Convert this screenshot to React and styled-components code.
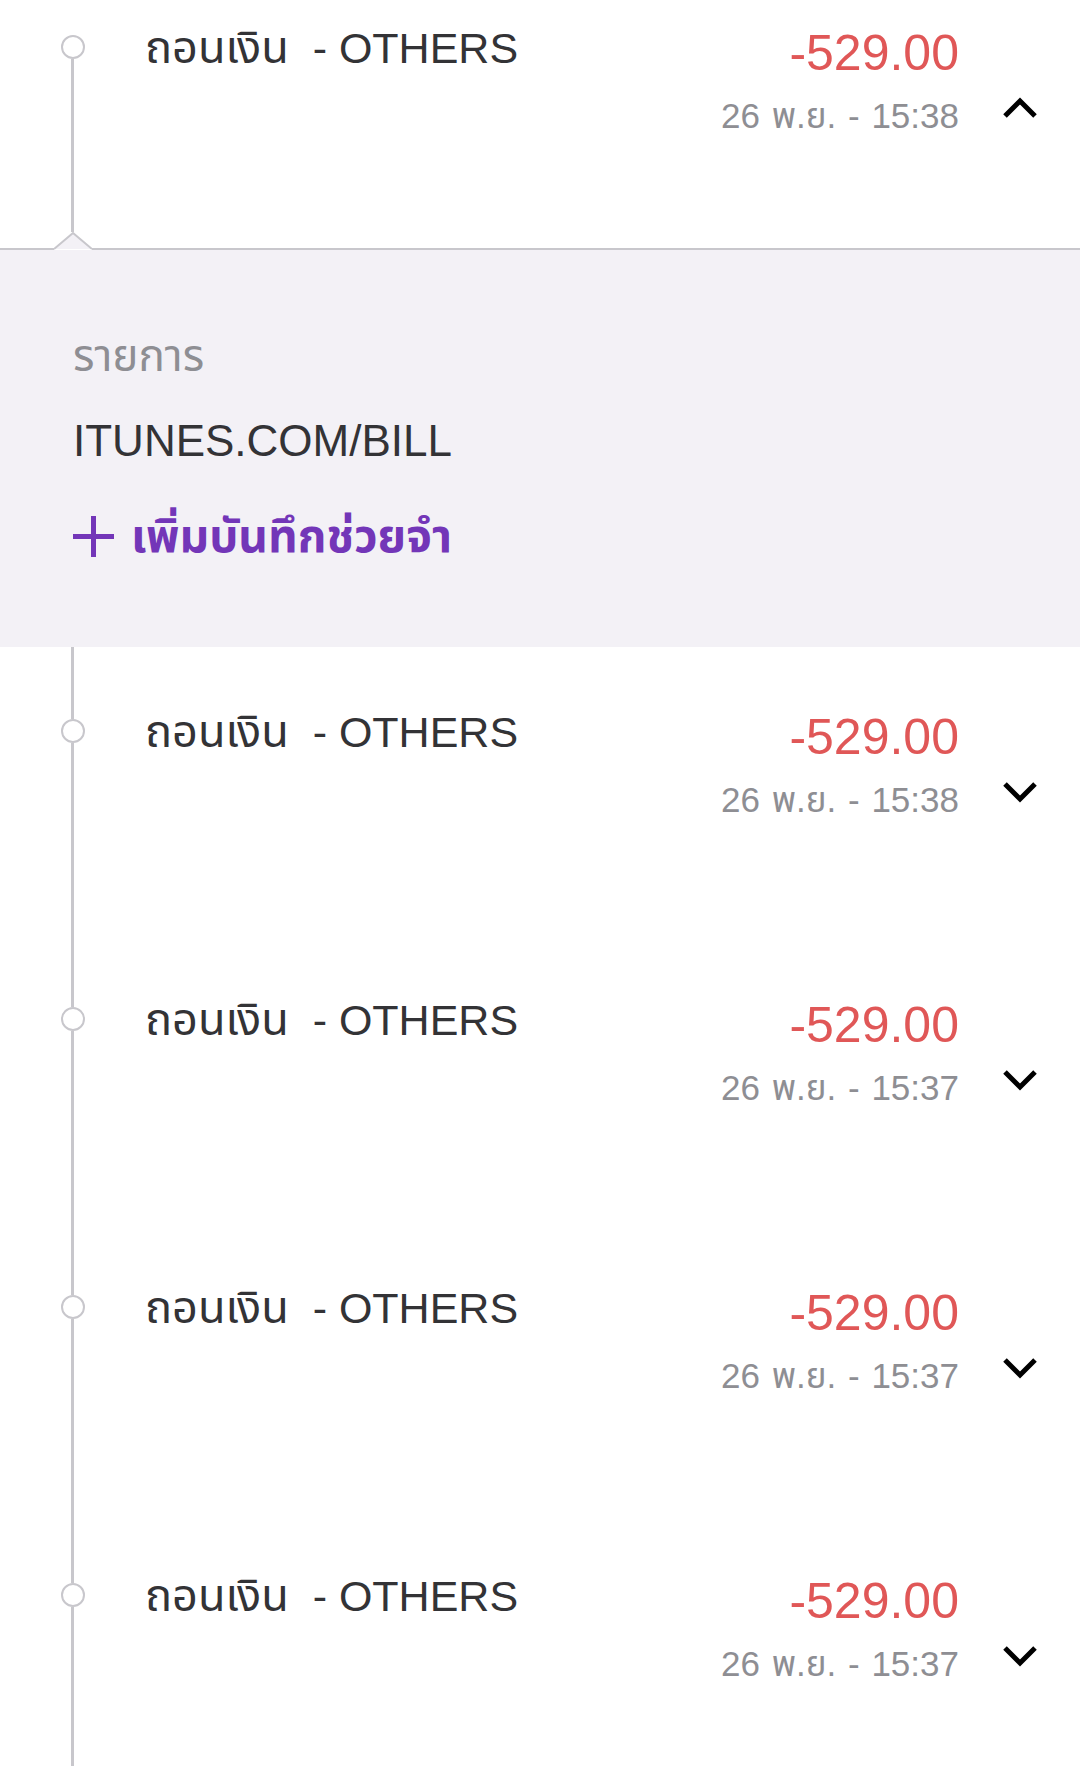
import React from 'react';
import styled, { createGlobalStyle } from 'styled-components';

const GlobalStyle = createGlobalStyle`
  html, body {
    margin: 0;
    padding: 0;
    background: #ffffff;
  }
  body {
    font-family: "Liberation Sans", "Noto Sans Thai", "Noto Sans", sans-serif;
    -webkit-font-smoothing: antialiased;
  }
`;

const palette = {
  text: '#333336',
  gray: '#8e8e93',
  red: '#e05757',
  purple: '#7336b8',
  line: '#c8c7cc',
  panel: '#f3f1f6',
};

const Page = styled.div`
  width: 1080px;
  height: 1766px;
  overflow: hidden;
  background: #fff;
`;

const List = styled.div`
  margin-top: -37px;
`;

const Row = styled.div`
  display: grid;
  grid-template-columns: 145px 1fr auto 121px;
  height: ${(p) => (p.$expanded ? '269px' : '288px')};
`;

const Rail = styled.div`
  display: flex;
  flex-direction: column;
  align-items: center;
`;

const RailLine = styled.div`
  width: 2.5px;
  background: ${(p) => (p.$hidden ? 'transparent' : palette.line)};
  height: ${(p) => (p.$grow ? 'auto' : '72px')};
  flex: ${(p) => (p.$grow ? '1' : 'none')};
`;

const Dot = styled.div`
  width: 24px;
  height: 24px;
  box-sizing: border-box;
  border: 2.5px solid ${palette.line};
  border-radius: 50%;
  background: #fff;
`;

const Title = styled.div`
  padding-top: 64px;
  font-size: 43px;
  line-height: 42px;
  color: ${palette.text};
  white-space: pre;
`;

const Thai = styled.span`
  font-size: 45px;
`;

const Figures = styled.div`
  display: flex;
  flex-direction: column;
  align-items: flex-end;
  padding-top: 65px;
  gap: 20px;
`;

const Amount = styled.div`
  font-size: 50px;
  line-height: 50px;
  color: ${palette.red};
`;

const DateText = styled.div`
  font-size: 35px;
  line-height: 35px;
  color: ${palette.gray};
  white-space: pre;
  word-spacing: 2px;
`;

const ChevronCell = styled.div`
  padding-top: 134px;
  padding-left: 44px;
`;

const Divider = styled.div`
  display: flex;
  align-items: flex-end;
  height: 18px;
`;

const DividerLine = styled.div`
  height: 2px;
  background: ${palette.line};
  width: ${(p) => (p.$width ? `${p.$width}px` : 'auto')};
  flex: ${(p) => (p.$width ? 'none' : '1')};
`;

const Panel = styled.div`
  background: ${palette.panel};
  height: 397px;
  box-sizing: border-box;
  padding: 84px 0 0 73px;
`;

const Label = styled.div`
  font-size: 44px;
  line-height: 44px;
  color: ${palette.gray};
`;

const Merchant = styled.div`
  margin-top: 41px;
  font-size: 44px;
  line-height: 44px;
  color: ${palette.text};
`;

const AddNote = styled.div`
  display: flex;
  align-items: center;
  gap: 17px;
  margin-top: 50px;
  font-size: 46px;
  line-height: 46px;
  font-weight: bold;
  color: ${palette.purple};
`;

const Chevron = ({ up }) => (
  <svg width="34" height="22" viewBox="0 0 34 22">
    <polyline
      points={up ? '2,19 17,4 32,19' : '2,3 17,18 32,3'}
      fill="none"
      stroke="#000"
      strokeWidth="5"
      strokeLinejoin="miter"
    />
  </svg>
);

const Notch = () => (
  <svg width="38" height="18" viewBox="0 0 38 18" style={{ display: 'block' }}>
    <polygon points="0,17 19,1 38,17" fill={palette.panel} />
    <polyline points="0,17 19,1 38,17" fill="none" stroke={palette.line} strokeWidth="2" />
  </svg>
);

const Plus = () => (
  <svg width="41" height="41" viewBox="0 0 41 41">
    <rect x="18" y="0" width="5" height="41" fill={palette.purple} />
    <rect x="0" y="18" width="41" height="5" fill={palette.purple} />
  </svg>
);

const transactions = [
  { time: '15:38', expanded: true },
  { time: '15:38' },
  { time: '15:37' },
  { time: '15:37' },
  { time: '15:37' },
];

const App = () => {
  return (
    <Page>
      <GlobalStyle />
      <List>
        {transactions.map(({ time, expanded }, index) => (
          <div key={index}>
            <Row $expanded={expanded}>
              <Rail>
                <RailLine $hidden={index === 0} />
                <Dot />
                <RailLine $grow />
              </Rail>
              <Title>
                <Thai>ถอนเงิน</Thai>
                {'  - OTHERS'}
              </Title>
              <Figures>
                <Amount>-529.00</Amount>
                <DateText>{`26 พ.ย. - ${time}`}</DateText>
              </Figures>
              <ChevronCell>
                <Chevron up={expanded} />
              </ChevronCell>
            </Row>
            {expanded && (
              <>
                <Divider>
                  <DividerLine $width={54} />
                  <Notch />
                  <DividerLine />
                </Divider>
                <Panel>
                  <Label>รายการ</Label>
                  <Merchant>ITUNES.COM/BILL</Merchant>
                  <AddNote>
                    <Plus />
                    เพิ่มบันทึกช่วยจำ
                  </AddNote>
                </Panel>
              </>
            )}
          </div>
        ))}
      </List>
    </Page>
  );
};

export default App;
